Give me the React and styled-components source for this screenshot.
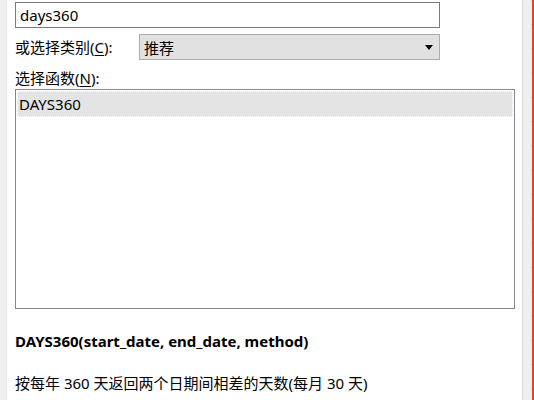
import React, { useState } from 'react'
import styled, { createGlobalStyle } from 'styled-components'

const GlobalStyle = createGlobalStyle`
    html, body {
        margin: 0;
        padding: 0;
        background: #ffffff;
    }
    body {
        font-family: "Noto Sans", "Noto Sans CJK SC", sans-serif;
        font-size: 15px;
        color: #000000;
    }
`

const Page = styled.div`
    display: flex;
    width: 534px;
    height: 400px;
    overflow: hidden;
    background: #ffffff;
`

const LeftRail = styled.div`
    width: 6px;
    flex: none;
    background: #f0f0f0;
    border-right: 1px solid #e6e6e6;
`

const Main = styled.main`
    flex: 1;
    display: flex;
    flex-direction: column;
    padding: 2px 7px 0 8px;
    min-width: 0;
`

const RightRail = styled.div`
    width: 9px;
    flex: none;
    background-color: #efefef;
    border-left: 1px solid #d9d9d9;
    background-image: linear-gradient(to bottom, #c4c4c4 0 1px, transparent 1px);
    background-size: 1px 24.3px;
    background-position: right 0 top 24px;
    background-repeat: repeat-y;
`

const RedEdge = styled.div`
    width: 2px;
    flex: none;
    background: #e2461e;
`

const SearchBox = styled.input`
    box-sizing: border-box;
    width: 425px;
    height: 26px;
    margin: 0;
    padding: 0 4px;
    border: 1px solid #7a7a7a;
    font: inherit;
    color: #000;
    outline: none;
`

const Row = styled.div`
    display: flex;
    align-items: center;
    margin-top: 6px;
`

const Label = styled.label`
    display: block;
    width: ${p => p.width || 'auto'};
    flex: none;
    line-height: 20px;
    margin-top: ${p => p.top || 0}px;
    white-space: nowrap;

    u {
        text-decoration: underline;
        text-underline-offset: 2px;
    }
`

const Select = styled.div`
    position: relative;
    box-sizing: border-box;
    width: 301px;
    height: 26px;
    display: flex;
    align-items: center;
    padding: 0 4px;
    background: #e1e1e1;
    border: 1px solid #adadad;
`

const Arrow = styled.span`
    position: absolute;
    right: 6px;
    top: 10px;
    width: 0;
    height: 0;
    border-left: 4px solid transparent;
    border-right: 4px solid transparent;
    border-top: 5px solid #000;
`

const ListBox = styled.div`
    box-sizing: border-box;
    width: 500px;
    height: 220px;
    margin-top: 1px;
    padding: 1px;
    border: 1px solid #828790;
`

const ListItem = styled.div`
    box-sizing: border-box;
    height: 26px;
    display: flex;
    align-items: center;
    padding: 0 2px;
    background: ${p => (p.selected ? '#e4e4e4' : 'transparent')};
    outline: ${p => (p.selected ? '1px dotted #ffffff' : 'none')};
    outline-offset: -1px;
`

const Signature = styled.div`
    margin-top: 22px;
    line-height: 20px;
    font-weight: 700;
`

const Description = styled.div`
    margin-top: 22px;
    line-height: 20px;
`

const functions = ['DAYS360']

const App = () => {
    const [query, setQuery] = useState('days360')
    const [selected] = useState('DAYS360')

    return (
        <>
            <GlobalStyle />
            <Page>
                <LeftRail />
                <Main>
                    <SearchBox value={query} onChange={e => setQuery(e.target.value)} />
                    <Row>
                        <Label width="124px">或选择类别(<u>C</u>):</Label>
                        <Select>
                            推荐
                            <Arrow />
                        </Select>
                    </Row>
                    <Label top={8}>选择函数(<u>N</u>):</Label>
                    <ListBox>
                        {functions.map(fn => (
                            <ListItem key={fn} selected={fn === selected}>{fn}</ListItem>
                        ))}
                    </ListBox>
                    <Signature>DAYS360(start_date, end_date, method)</Signature>
                    <Description>按每年 360 天返回两个日期间相差的天数(每月 30 天)</Description>
                </Main>
                <RightRail />
                <RedEdge />
            </Page>
        </>
    )
}

export default App
